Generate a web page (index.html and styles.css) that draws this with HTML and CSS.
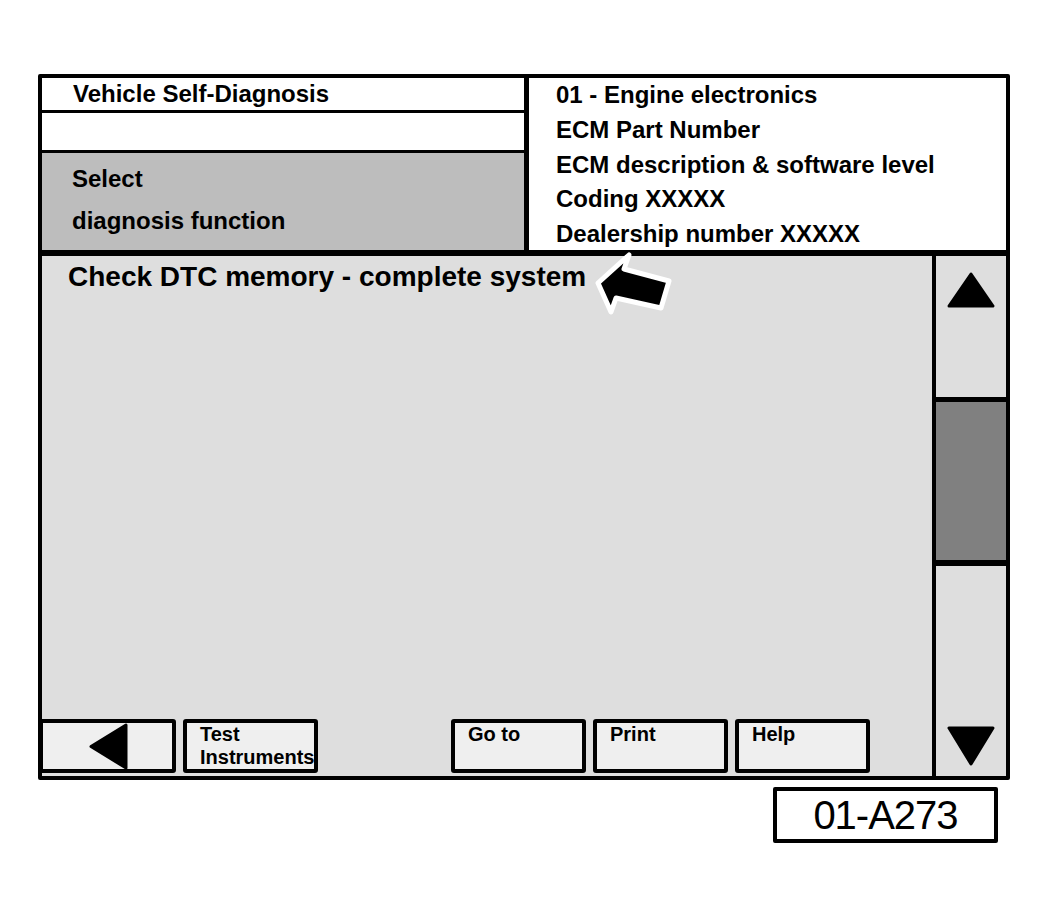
FILE: index.html
```html
<!DOCTYPE html>
<html>
<head>
<meta charset="utf-8">
<title>Vehicle Self-Diagnosis</title>
<link rel="stylesheet" href="styles.css">
</head>
<body>
<div class="frame">
  <div class="header">
    <div class="hleft">
      <div class="title">Vehicle Self-Diagnosis</div>
      <div class="blank"></div>
      <div class="prompt">
        <div>Select</div>
        <div>diagnosis function</div>
      </div>
    </div>
    <div class="hright">
      <div>01 - Engine electronics</div>
      <div>ECM Part Number</div>
      <div>ECM description &amp; software level</div>
      <div>Coding XXXXX</div>
      <div>Dealership number XXXXX</div>
    </div>
  </div>
  <div class="main">
    <div class="content">
      <div class="msg">Check DTC memory - complete system</div>
      <svg class="pointer" width="95" height="80" viewBox="0 0 95 80">
        <polygon points="13,38 44,10 39,24 84,36 76,63 31,53 26,67" fill="#000" stroke="#fff" stroke-width="5" stroke-linejoin="round"/>
      </svg>
      <div class="buttons">
        <div class="btn back">
          <svg width="40" height="47" viewBox="0 0 40 47"><polygon points="3,23.5 38,2 38,45" fill="#000" stroke="#000" stroke-width="3" stroke-linejoin="round"/></svg>
        </div>
        <div class="btn">Test<br>Instruments</div>
        <div class="btn goto">Go to</div>
        <div class="btn">Print</div>
        <div class="btn">Help</div>
      </div>
    </div>
    <div class="scroll">
      <div class="up">
        <svg width="48" height="36" viewBox="0 0 48 36"><polygon points="24,2 46,34 2,34" fill="#000" stroke="#000" stroke-width="3" stroke-linejoin="round"/></svg>
      </div>
      <div class="thumb"></div>
      <div class="down">
        <svg width="48" height="40" viewBox="0 0 48 40"><polygon points="2,2 46,2 24,38" fill="#000" stroke="#000" stroke-width="3" stroke-linejoin="round"/></svg>
      </div>
    </div>
  </div>
</div>
<div class="ref">01-A273</div>
</body>
</html>
```
FILE: styles.css
```css
* { box-sizing: border-box; }
body {
  margin: 0;
  background: #fff;
  font-family: "Liberation Sans", Arial, sans-serif;
  color: #000;
}
.frame {
  margin: 74px 0 0 38px;
  width: 972px;
  border: 4px solid #000;
  border-radius: 2px;
}
.header {
  display: flex;
  height: 178px;
  border-bottom: 6px solid #000;
}
.hleft {
  width: 487px;
  border-right: 5px solid #000;
  display: flex;
  flex-direction: column;
}
.title {
  height: 35px;
  border-bottom: 3px solid #000;
  background: #fff;
  font-size: 24px;
  font-weight: bold;
  line-height: 32px;
  padding-left: 31px;
}
.blank {
  height: 40px;
  border-bottom: 3px solid #000;
  background: #fff;
}
.prompt {
  flex: 1;
  background: #bdbdbd;
  font-size: 24px;
  font-weight: bold;
  line-height: 42px;
  padding: 5px 0 0 30px;
}
.hright {
  flex: 1;
  background: #fff;
  font-size: 24px;
  font-weight: bold;
  line-height: 34.75px;
  padding-left: 27px;
}
.main {
  display: flex;
  height: 520px;
}
.content {
  flex: 1;
  position: relative;
  background: #dedede;
  display: flex;
  flex-direction: column;
}
.msg {
  font-size: 28px;
  font-weight: bold;
  line-height: 32px;
  padding: 5px 0 0 26px;
}
.pointer {
  position: absolute;
  left: 543px;
  top: -11px;
  overflow: visible;
}
.buttons {
  margin-top: auto;
  margin-bottom: 3px;
  display: flex;
  gap: 7px;
}
.btn {
  width: 135px;
  height: 54px;
  border: 4px solid #000;
  border-radius: 3px;
  background: #efefef;
  font-size: 20px;
  font-weight: bold;
  line-height: 23px;
  padding-left: 13px;
  white-space: nowrap;
}
.back {
  margin-left: -3px;
  width: 137px;
  padding: 0;
  display: flex;
  align-items: center;
  justify-content: center;
}
.goto { margin-left: 126px; }
.scroll {
  width: 74px;
  border-left: 4px solid #000;
  display: flex;
  flex-direction: column;
}
.up {
  height: 141px;
  background: #dedede;
  display: flex;
  justify-content: center;
  padding-top: 16px;
}
.thumb {
  height: 169px;
  background: #808080;
  border-top: 5px solid #000;
  border-bottom: 6px solid #000;
}
.down {
  flex: 1;
  background: #dedede;
  display: flex;
  justify-content: center;
  align-items: flex-end;
  padding-bottom: 10px;
}
.ref {
  margin: 7px 0 0 773px;
  width: 225px;
  height: 56px;
  border: 4px solid #000;
  border-radius: 2px;
  font-size: 40px;
  line-height: 48px;
  text-align: center;
  letter-spacing: -1px;
}
```
